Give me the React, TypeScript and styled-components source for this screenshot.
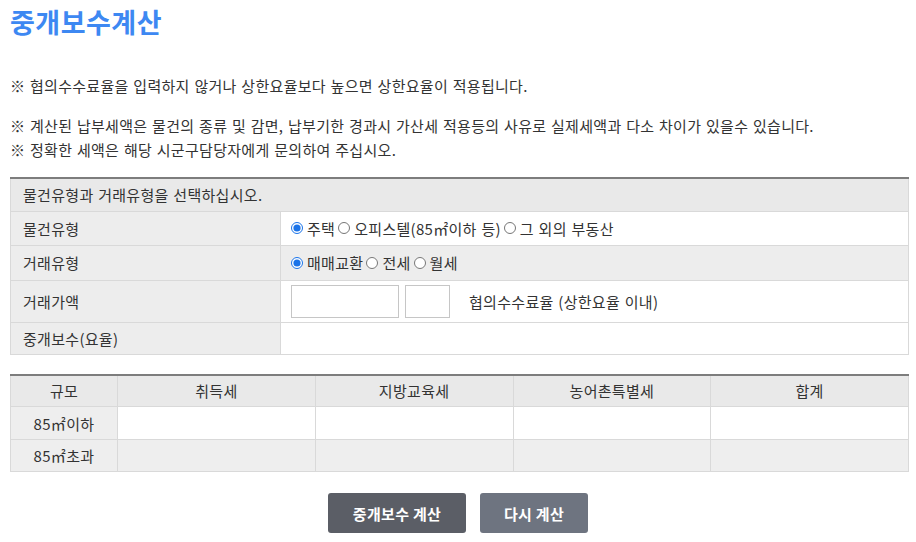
import styled, { createGlobalStyle } from "styled-components";

const GlobalStyle = createGlobalStyle`
  body {
    margin: 0;
    background: #ffffff;
    color: #333333;
    font-family: "Noto Sans CJK KR", "Noto Sans", sans-serif;
    font-size: 15px;
    letter-spacing: 0.3px;
    word-spacing: 1px;
  }
`;

const Page = styled.div`
  padding: 0 7px 20px 10px;
`;

const Title = styled.h1`
  margin: 4px 0 0;
  font-size: 27px;
  line-height: 36px;
  font-weight: 600;
  color: #3d88f2;
  letter-spacing: 0.5px;
`;

const Note = styled.p<{ gap: number }>`
  margin: ${(p) => p.gap}px 0 0;
  line-height: 24px;
  font-size: 15px;
`;

const FormTable = styled.table`
  width: 100%;
  margin-top: 15px;
  border-collapse: collapse;
  border-top: 2px solid #7d7d7d;
  & td {
    border: 1px solid #d9d9d9;
    padding: 0 12px;
    font-size: 15px;
  }
`;

const Row = styled.tr<{ h: number }>`
  height: ${(p) => p.h}px;
`;

const HeadCell = styled.td`
  background: #e9e9e9;
`;

const LabelCell = styled.td`
  width: 245px;
  background: #ededed;
`;

const ValueCell = styled.td<{ shaded?: boolean }>`
  background: ${(p) => (p.shaded ? "#ededed" : "#ffffff")};
  && {
    padding-left: 10px;
  }
`;

const RadioLabel = styled.label`
  display: inline-flex;
  align-items: center;
  margin-right: 3px;
  cursor: pointer;
`;

const Radio = styled.input`
  width: 12px;
  height: 12px;
  margin: 0 4px 0 0;
  accent-color: #1a73e8;
`;

const Field = styled.div`
  display: flex;
  align-items: center;
  gap: 6px;
`;

const TextBox = styled.input<{ w: number }>`
  width: ${(p) => p.w}px;
  height: 33px;
  box-sizing: border-box;
  border: 1px solid #c6c6c6;
  padding: 0 6px;
  font-family: inherit;
  font-size: 14px;
`;

const FieldHint = styled.span`
  margin-left: 13px;
`;

const TaxTable = styled.table`
  width: 100%;
  margin-top: 19px;
  border-collapse: collapse;
  border-top: 2px solid #7d7d7d;
  table-layout: fixed;
  & th,
  & td {
    border: 1px solid #d9d9d9;
    text-align: center;
    font-size: 15px;
    font-weight: 400;
    padding: 0;
  }
`;

const TaxHead = styled.th`
  background: #e9e9e9;
`;

const TaxCell = styled.td<{ shaded?: boolean }>`
  background: ${(p) => (p.shaded ? "#eeeeee" : "#ffffff")};
`;

const Actions = styled.div`
  display: flex;
  justify-content: center;
  gap: 14px;
  margin-top: 21px;
  padding-right: 3px;
`;

const Button = styled.button<{ tone: "dark" | "light"; w: number }>`
  width: ${(p) => p.w}px;
  height: 40px;
  padding: 0;
  border: none;
  border-radius: 3px;
  background: ${(p) => (p.tone === "dark" ? "#5b5e66" : "#6e7480")};
  color: #ffffff;
  font-family: inherit;
  font-size: 15px;
  font-weight: 700;
  letter-spacing: 0.3px;
  cursor: pointer;
`;

const propertyTypes = ["주택", "오피스텔(85㎡이하 등)", "그 외의 부동산"];
const dealTypes = ["매매교환", "전세", "월세"];
const taxColumns = ["취득세", "지방교육세", "농어촌특별세", "합계"];
const taxRows = ["85㎡이하", "85㎡초과"];

function RadioGroup({ name, items }: { name: string; items: string[] }) {
  return (
    <>
      {items.map((item, i) => (
        <RadioLabel key={item}>
          <Radio type="radio" name={name} defaultChecked={i === 0} />
          {item}
        </RadioLabel>
      ))}
    </>
  );
}

function App() {
  return (
    <Page>
      <GlobalStyle />
      <Title>중개보수계산</Title>
      <Note gap={34}>
        ※ 협의수수료율을 입력하지 않거나 상한요율보다 높으면 상한요율이 적용됩니다.
      </Note>
      <Note gap={16}>
        ※ 계산된 납부세액은 물건의 종류 및 감면, 납부기한 경과시 가산세 적용등의 사유로 실제세액과 다소 차이가 있을수 있습니다.
        <br />※ 정확한 세액은 해당 시군구담당자에게 문의하여 주십시오.
      </Note>

      <FormTable>
        <tbody>
          <Row h={33}>
            <HeadCell colSpan={2}>물건유형과 거래유형을 선택하십시오.</HeadCell>
          </Row>
          <Row h={34}>
            <LabelCell>물건유형</LabelCell>
            <ValueCell>
              <RadioGroup name="property" items={propertyTypes} />
            </ValueCell>
          </Row>
          <Row h={35}>
            <LabelCell>거래유형</LabelCell>
            <ValueCell shaded>
              <RadioGroup name="deal" items={dealTypes} />
            </ValueCell>
          </Row>
          <Row h={42}>
            <LabelCell>거래가액</LabelCell>
            <ValueCell>
              <Field>
                <TextBox w={108} />
                <TextBox w={45} />
                <FieldHint>협의수수료율 (상한요율 이내)</FieldHint>
              </Field>
            </ValueCell>
          </Row>
          <Row h={32}>
            <LabelCell>중개보수(요율)</LabelCell>
            <ValueCell />
          </Row>
        </tbody>
      </FormTable>

      <TaxTable>
        <colgroup>
          <col style={{ width: 107 }} />
          <col />
          <col />
          <col />
          <col />
        </colgroup>
        <thead>
          <Row h={32}>
            <TaxHead>규모</TaxHead>
            {taxColumns.map((c) => (
              <TaxHead key={c}>{c}</TaxHead>
            ))}
          </Row>
        </thead>
        <tbody>
          {taxRows.map((r, i) => (
            <Row h={i === 0 ? 33 : 32} key={r}>
              <TaxCell shaded>{r}</TaxCell>
              {taxColumns.map((c) => (
                <TaxCell key={c} shaded={i === 1} />
              ))}
            </Row>
          ))}
        </tbody>
      </TaxTable>

      <Actions>
        <Button tone="dark" w={138}>중개보수 계산</Button>
        <Button tone="light" w={108}>다시 계산</Button>
      </Actions>
    </Page>
  );
}

export default App;
